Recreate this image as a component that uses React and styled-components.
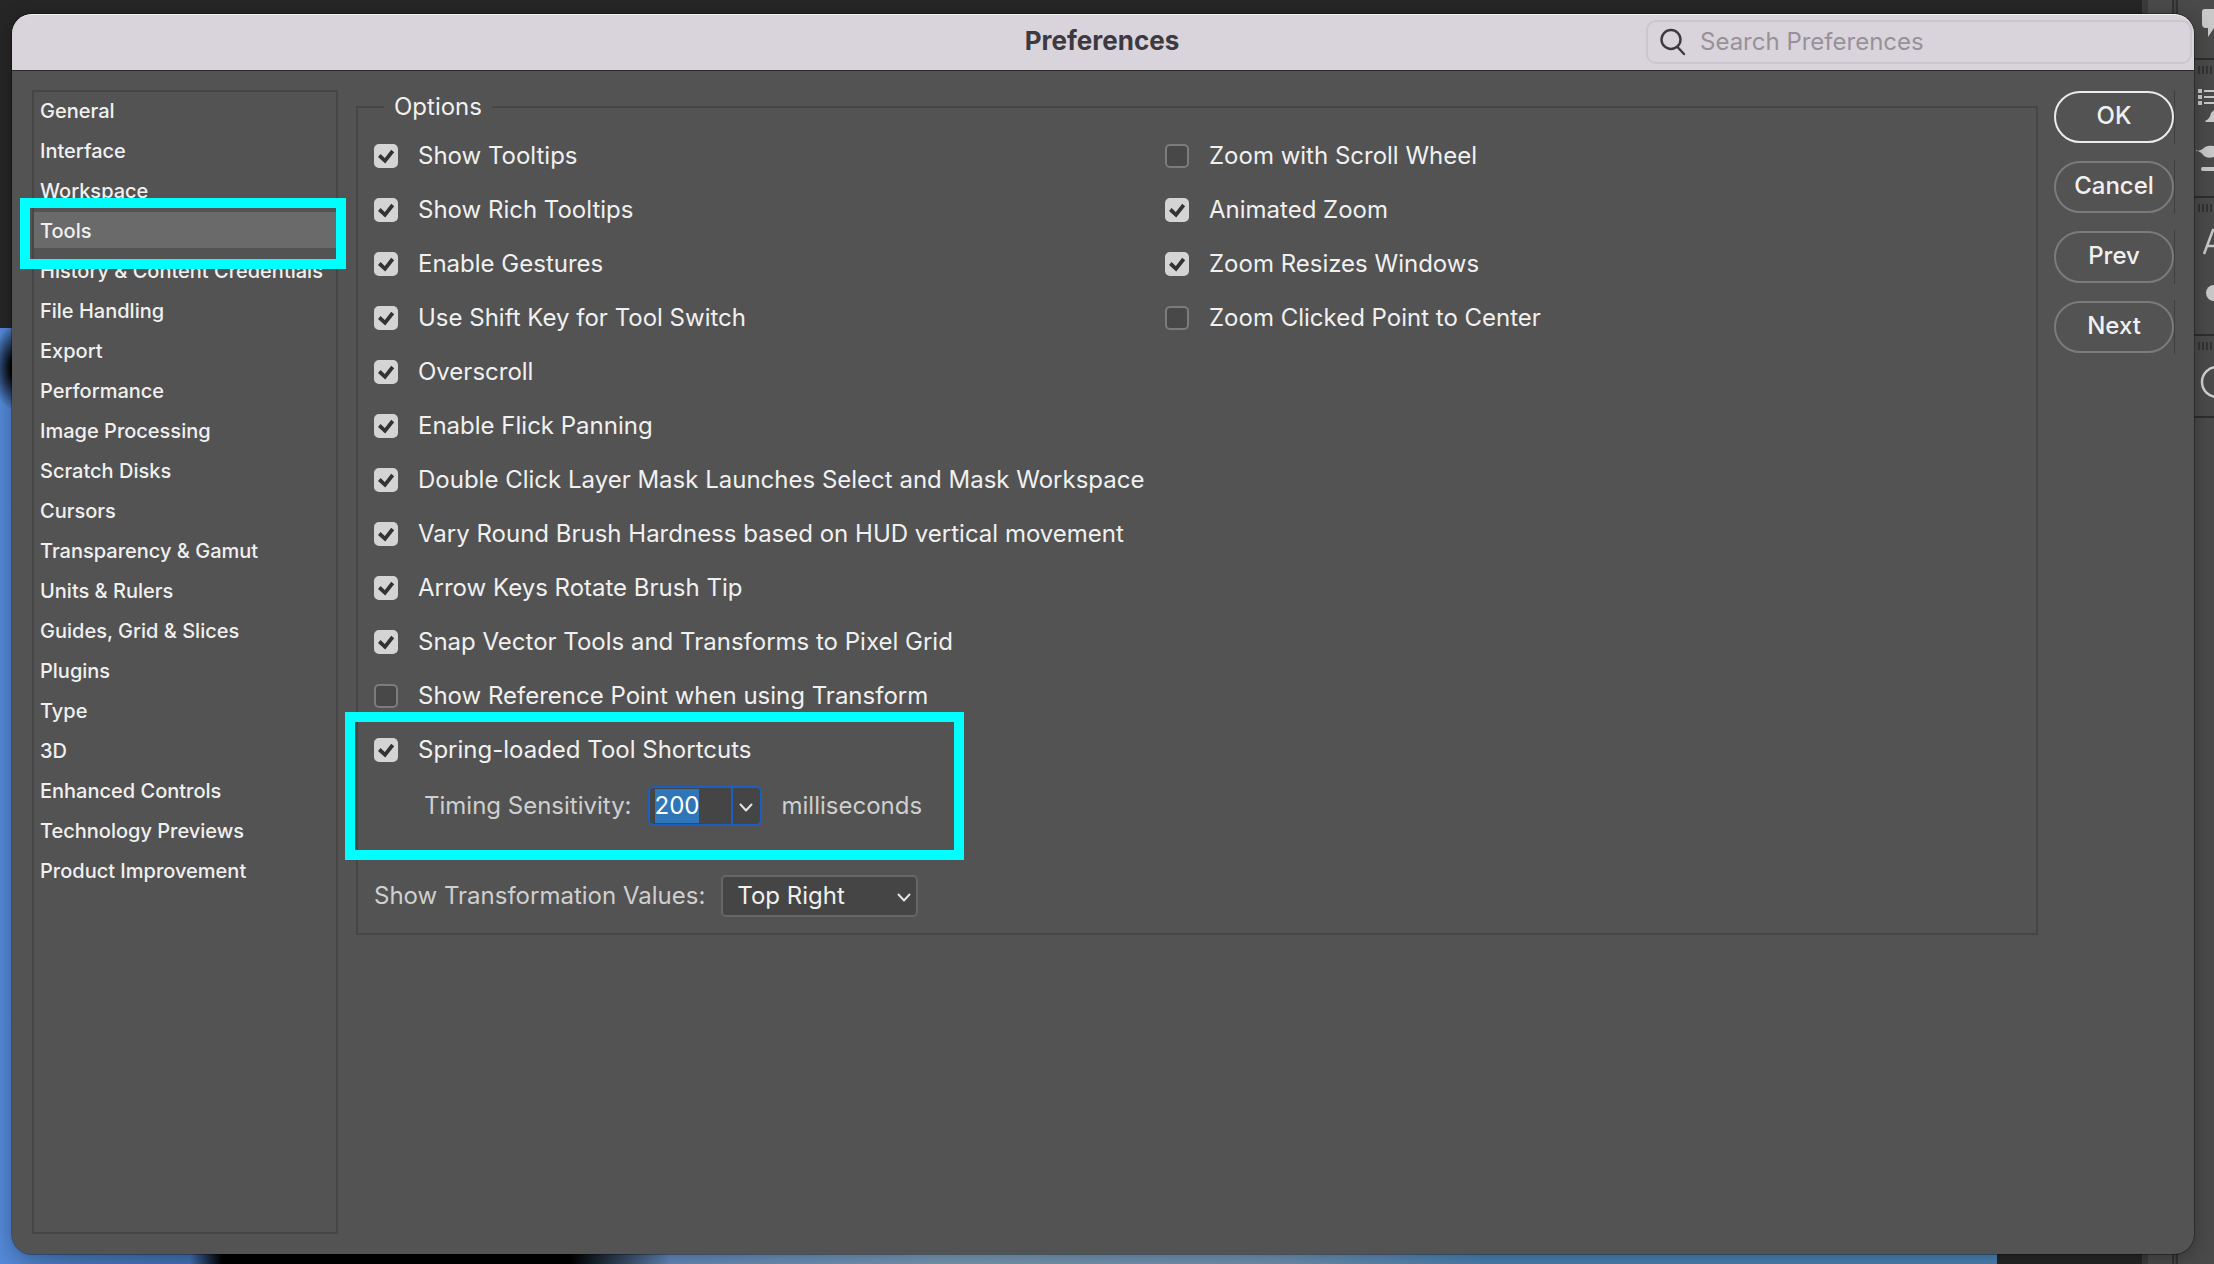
import React, { useState } from "react";
import styled, { createGlobalStyle, css } from "styled-components";

const Global = createGlobalStyle`
  * { box-sizing: border-box; }
  body { margin: 0; background: #262626; font-family: Inter, "Liberation Sans", sans-serif; color: #f0f0f0; }
  button, input, select { font: inherit; color: inherit; }
  ::selection { background: #2f76b8; color: #fff; }
`;

const Desktop = styled.div`
  position: relative;
  min-height: 100vh;
  padding: 14px 20px 10px 12px;
  display: flex;
  overflow: hidden;
  background: #262626;
`;

const Canvas = styled.div`
  position: absolute;
  left: 0;
  top: 328px;
  bottom: 0;
  right: 217px;
  background:
    radial-gradient(ellipse 30px 44px at 20px 40px, #000 30%, transparent 100%),
    linear-gradient(90deg, #5389d8 0, #4a78bd 70px, #4370b4 190px, #000 222px, #000 570px, #658abb 670px, #7a9ab5 950px, #7192b2 1280px, #4c82b2 1480px);
`;

const Dock = styled.div`
  position: absolute;
  right: 0;
  top: 0;
  bottom: 0;
  width: 72px;
  background: linear-gradient(90deg, #3c3c3c 6px, #4b4b4b 6px, #4b4b4b 30px, #323232 30px, #323232 32px, #444 32px, #444 34px, #323232 34px, #323232 36px, #4a4a4a 36px);
`;

const DockIcons = styled.svg`
  position: absolute;
  right: 0;
  top: 0;
`;

const Window = styled.main`
  position: relative;
  flex: 1;
  display: flex;
  flex-direction: column;
  border-radius: 20px;
  background: #535353;
  box-shadow: 0 0 0 1px rgba(0, 0, 0, 0.3), 0 4px 20px rgba(0, 0, 0, 0.3);
`;

const TitleBar = styled.header`
  display: grid;
  grid-template-columns: 1fr auto 1fr;
  align-items: center;
  height: 57px;
  padding: 0 2px 2px 0;
  border-top: 1px solid #f4f0f5;
  border-bottom: 1px solid #2b2b2b;
  border-radius: 20px 20px 0 0;
  background: #d9d4db;
`;

const Title = styled.h1`
  grid-column: 2;
  margin: 0;
  padding-bottom: 2px;
  font-size: 26px;
  line-height: 30px;
  font-weight: 700;
  color: #3d393f;
`;

const SearchBox = styled.label`
  justify-self: end;
  display: flex;
  align-items: center;
  gap: 14px;
  width: 546px;
  max-width: 100%;
  height: 44px;
  padding-left: 12px;
  border: 2px solid #cbc6cd;
  border-radius: 10px;
  color: #3d393f;
`;

const SearchInput = styled.input`
  flex: 1;
  min-width: 0;
  padding: 0;
  border: 0;
  outline: 0;
  background: none;
  font-size: 24px;
  &::placeholder { color: #979199; opacity: 1; }
`;

const Body = styled.div`
  flex: 1;
  display: flex;
  align-items: flex-start;
  padding: 19px 19px 20px 20px;
`;

const Sidebar = styled.nav`
  position: relative;
  align-self: stretch;
  width: 306px;
  margin-right: 18px;
  border: 2px solid #464646;
`;

const NavList = styled.ul`
  display: flex;
  flex-direction: column;
  gap: 4px;
  margin: 0;
  padding: 0;
  list-style: none;
`;

const NavLink = styled.a`
  display: block;
  padding: 2px 0 0 6px;
  font-size: 20px;
  font-weight: 500;
  line-height: 34px;
  white-space: nowrap;
  color: inherit;
  text-decoration: none;
  background: ${(p) => (p.$active ? "#6a6a6a" : "none")};
`;

const Highlight = styled.div`
  position: absolute;
  border: 10px solid #00ffff;
  pointer-events: none;
  ${(p) => p.$area === "nav"
    ? css`left: -14px; top: 106px; width: 326px; height: 71px;`
    : css`left: -29px; top: -21px; width: 619px; height: 148px;`}
`;

const Options = styled.fieldset`
  position: relative;
  flex: 1;
  min-width: 0;
  margin: 0 16px 0 0;
  padding: 15px 16px 16px;
  border: 2px solid #464646;
  font-size: 24px;
  line-height: 34px;
`;

const Legend = styled.legend`
  margin-left: 10px;
  padding: 0 10px;
`;

const Columns = styled.div`
  display: flex;
  gap: 28px;
`;

const Column = styled.div`
  display: flex;
  flex-direction: column;
  gap: 20px;
  width: ${(p) => p.$width || "auto"};
`;

const CheckLabel = styled.label`
  display: flex;
  align-items: center;
  gap: 20px;
  white-space: nowrap;
`;

const CheckBox = styled.input`
  appearance: none;
  flex: none;
  width: 24px;
  height: 24px;
  margin: 0;
  border: 2px solid #7c7c7c;
  border-radius: 5px;
  background: #484848;
  &:checked {
    border-color: #d4d4d4;
    background: #d4d4d4;
  }
`;

const CheckWrap = styled.span`
  display: grid;
  > * { grid-area: 1 / 1; }
  svg { pointer-events: none; }
`;

const SpringGroup = styled.div`
  position: relative;
`;

const Field = styled.div`
  display: flex;
  align-items: center;
  margin-top: ${(p) => p.$top};
  padding-left: ${(p) => p.$indent || "0"};
  color: #cfcfcf;
  white-space: nowrap;
`;

const Combo = styled.div`
  display: flex;
  width: 114px;
  height: 40px;
  margin: 0 20px 0 16px;
  border: 2px solid #1c5fc0;
  border-radius: 6px;
  background: #454545;
  overflow: hidden;
  color: #fff;
`;

const ComboInput = styled.input`
  flex: 1;
  min-width: 0;
  padding: 0 0 0 5px;
  border: 0;
  outline: 0;
  background: none;
`;

const ComboButton = styled.button`
  display: grid;
  place-items: center;
  width: 29px;
  padding: 2px 0 0;
  border: 0;
  border-left: 2px solid #1c5fc0;
  background: none;
`;

const SelectWrap = styled.span`
  display: grid;
  align-items: center;
  margin-left: 16px;
  color: #f0f0f0;
  > * { grid-area: 1 / 1; }
  svg { justify-self: end; margin: 2px 7px 0 0; pointer-events: none; }
`;

const Select = styled.select`
  appearance: none;
  width: 197px;
  height: 42px;
  padding: 0 0 0 14px;
  border: 2px solid #666;
  border-radius: 5px;
  background: #454545;
`;

const Actions = styled.div`
  display: flex;
  flex-direction: column;
  gap: 16px;
`;

const ActionSlot = styled.div`
  padding: 1px 0;
  border-right: 1px solid #3f3f3f;
`;

const ActionButton = styled.button`
  display: block;
  width: 120px;
  height: 52px;
  padding: 0 0 4px;
  border: 2px solid ${(p) => (p.$primary ? "#ececec" : "#7b7b7b")};
  border-radius: 26px;
  background: none;
  font-size: 24px;
  font-weight: 500;
`;

const pages = ["General", "Interface", "Workspace", "Tools", "History & Content Credentials", "File Handling", "Export", "Performance", "Image Processing", "Scratch Disks", "Cursors", "Transparency & Gamut", "Units & Rulers", "Guides, Grid & Slices", "Plugins", "Type", "3D", "Enhanced Controls", "Technology Previews", "Product Improvement"];

const toolOptions = [
  ["Show Tooltips", true],
  ["Show Rich Tooltips", true],
  ["Enable Gestures", true],
  ["Use Shift Key for Tool Switch", true],
  ["Overscroll", true],
  ["Enable Flick Panning", true],
  ["Double Click Layer Mask Launches Select and Mask Workspace", true],
  ["Vary Round Brush Hardness based on HUD vertical movement", true],
  ["Arrow Keys Rotate Brush Tip", true],
  ["Snap Vector Tools and Transforms to Pixel Grid", true],
  ["Show Reference Point when using Transform", false],
];

const zoomOptions = [
  ["Zoom with Scroll Wheel", false],
  ["Animated Zoom", true],
  ["Zoom Resizes Windows", true],
  ["Zoom Clicked Point to Center", false],
];

function Check({ label, initial }) {
  const [on, setOn] = useState(initial);
  return (
    <CheckLabel>
      <CheckWrap>
        <CheckBox type="checkbox" checked={on} onChange={(e) => setOn(e.target.checked)} />
        {on && (
          <svg width="24" height="24" viewBox="0 0 24 24" aria-hidden="true">
            <path d="M5.300 11.500l5.700 5.300L18.700 7" fill="none" stroke="#333" strokeWidth="3.800" />
          </svg>
        )}
      </CheckWrap>
      {label}
    </CheckLabel>
  );
}

const Chevron = () => (
  <svg width="14" height="9" viewBox="0 0 14 9" fill="none" stroke="#e4e4e4" strokeWidth="2" strokeLinecap="round" strokeLinejoin="round" aria-hidden="true">
    <path d="M1.5 1.5L7 7.5l5.500-6" />
  </svg>
);

const Grip = ({ y }) => <path d={`M5 ${y}v8M9 ${y}v8M13 ${y}v8M17 ${y}v8`} stroke="#333" strokeWidth="2" />;

export default function App() {
  return (
    <Desktop>
      <Global />
      <Canvas />
      <Dock />
      <DockIcons width="20" height="430" viewBox="0 0 20 430" aria-hidden="true">
        <path d="M0 59h20M0 197h20M0 335h20M0 417h20" stroke="#2e2e2e" strokeWidth="2" />
        <Grip y={66} /><Grip y={204} /><Grip y={342} />
        <g fill="#c9c9c9">
          <path d="M11 9h10v19h-1l-6 9v-9h-2q-4 0-4-4V12q0-3 3-3z" />
          <path d="M4 89h4v4H4zM4 95h4v4H4zM4 101h4v4H4zM10 90h10v2H10zM10 96h10v2H10zM10 102h10v2H10zM11 121q5-2 6-8l3-3v12h-8z" />
          <path d="M2 151q5 0 9-4 4-2 9-1v11q-6 2-10-1-3-4-8-6zM8 167h12v4H8q-2-2 0-4z" />
          <circle cx="20" cy="293" r="8" />
        </g>
        <path d="M10 254l9-24h3M14 246h8" fill="none" stroke="#c9c9c9" strokeWidth="2.500" />
        <circle cx="23" cy="382" r="15" fill="none" stroke="#d2d2d2" strokeWidth="2.500" />
      </DockIcons>
      <Window>
        <TitleBar>
          <Title>Preferences</Title>
          <SearchBox>
            <svg width="26" height="28" viewBox="0 0 26 28" fill="none" stroke="currentColor" strokeWidth="2.400" strokeLinecap="round" aria-hidden="true">
              <circle cx="11" cy="11.500" r="9.500" />
              <path d="M17.500 19l6.500 7" />
            </svg>
            <SearchInput type="search" placeholder="Search Preferences" aria-label="Search Preferences" />
          </SearchBox>
        </TitleBar>
        <Body>
          <Sidebar aria-label="Preference pages">
            <NavList>
              {pages.map((name) => (
                <li key={name}>
                  <NavLink href="#" $active={name === "Tools"}>{name}</NavLink>
                </li>
              ))}
            </NavList>
            <Highlight $area="nav" />
          </Sidebar>
          <Options>
            <Legend>Options</Legend>
            <Columns>
              <Column $width="763px">
                {toolOptions.map(([label, on]) => <Check key={label} label={label} initial={on} />)}
                <SpringGroup>
                  <Check label="Spring-loaded Tool Shortcuts" initial={true} />
                  <Field $top="19px" $indent="50px">
                    <label htmlFor="timing">Timing Sensitivity:</label>
                    <Combo>
                      <ComboInput id="timing" defaultValue="200" autoFocus onFocus={(e) => e.target.select()} />
                      <ComboButton type="button" aria-label="Timing presets"><Chevron /></ComboButton>
                    </Combo>
                    milliseconds
                  </Field>
                  <Highlight $area="spring" />
                </SpringGroup>
              </Column>
              <Column>
                {zoomOptions.map(([label, on]) => <Check key={label} label={label} initial={on} />)}
              </Column>
            </Columns>
            <Field $top="49px">
              <label htmlFor="values">Show Transformation Values:</label>
              <SelectWrap>
                <Select id="values" defaultValue="Top Right">
                  <option>Top Right</option>
                </Select>
                <Chevron />
              </SelectWrap>
            </Field>
          </Options>
          <Actions>
            <ActionSlot><ActionButton type="button" $primary>OK</ActionButton></ActionSlot>
            <ActionSlot><ActionButton type="button">Cancel</ActionButton></ActionSlot>
            <ActionSlot><ActionButton type="button">Prev</ActionButton></ActionSlot>
            <ActionSlot><ActionButton type="button">Next</ActionButton></ActionSlot>
          </Actions>
        </Body>
      </Window>
    </Desktop>
  );
}
